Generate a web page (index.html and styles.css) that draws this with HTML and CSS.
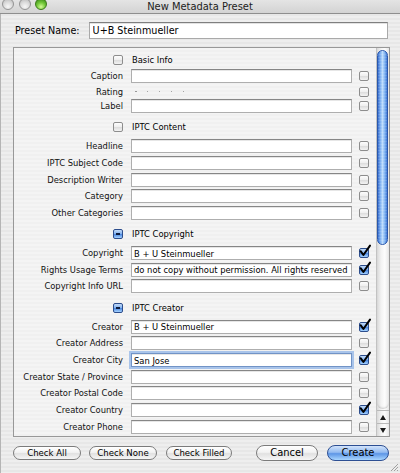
FILE: index.html
```html
<!DOCTYPE html>
<html>
<head>
<meta charset="utf-8">
<title>New Metadata Preset</title>
<link rel="stylesheet" href="styles.css">
</head>
<body>
<div class="window">
  <div class="titlebar">
    <div class="lights"><span class="light gray"></span><span class="light gray"></span><span class="light green"></span></div>
    <div class="title">New Metadata Preset</div>
    <div></div>
  </div>

  <div class="preset">
    <span class="preset-label">Preset Name:</span>
    <input class="preset-field" value="U+B Steinmueller" readonly>
  </div>

  <div class="panel">
    <div class="form">
      <div class="section first"><span class="cb"></span><span class="sec-title">Basic Info</span></div>
      <div class="row"><span class="lbl">Caption</span><input class="field" readonly><span class="cb"></span></div>
      <div class="row rating"><span class="lbl">Rating</span><span class="dots"><i></i><i></i><i></i><i></i><i></i></span><span class="cb"></span></div>
      <div class="row"><span class="lbl">Label</span><input class="field" readonly><span class="cb"></span></div>

      <div class="section"><span class="cb"></span><span class="sec-title">IPTC Content</span></div>
      <div class="row"><span class="lbl">Headline</span><input class="field" readonly><span class="cb"></span></div>
      <div class="row"><span class="lbl">IPTC Subject Code</span><input class="field" readonly><span class="cb"></span></div>
      <div class="row"><span class="lbl">Description Writer</span><input class="field" readonly><span class="cb"></span></div>
      <div class="row"><span class="lbl">Category</span><input class="field" readonly><span class="cb"></span></div>
      <div class="row"><span class="lbl">Other Categories</span><input class="field" readonly><span class="cb"></span></div>

      <div class="section"><span class="cb mixed"></span><span class="sec-title">IPTC Copyright</span></div>
      <div class="row"><span class="lbl">Copyright</span><input class="field" value="B + U Steinmueller" readonly><span class="cb on"><svg viewBox="0 0 12 13"><path d="M1.6 6.2 L4.4 10 L11 0.6"/></svg></span></div>
      <div class="row"><span class="lbl">Rights Usage Terms</span><input class="field" value="do not copy without permission. All rights reserved" readonly><span class="cb on"><svg viewBox="0 0 12 13"><path d="M1.6 6.2 L4.4 10 L11 0.6"/></svg></span></div>
      <div class="row"><span class="lbl">Copyright Info URL</span><input class="field" readonly><span class="cb"></span></div>

      <div class="section"><span class="cb mixed"></span><span class="sec-title">IPTC Creator</span></div>
      <div class="row"><span class="lbl">Creator</span><input class="field" value="B + U Steinmueller" readonly><span class="cb on"><svg viewBox="0 0 12 13"><path d="M1.6 6.2 L4.4 10 L11 0.6"/></svg></span></div>
      <div class="row"><span class="lbl">Creator Address</span><input class="field" readonly><span class="cb"></span></div>
      <div class="row"><span class="lbl">Creator City</span><input class="field focus" value="San Jose" readonly><span class="cb on"><svg viewBox="0 0 12 13"><path d="M1.6 6.2 L4.4 10 L11 0.6"/></svg></span></div>
      <div class="row"><span class="lbl">Creator State / Province</span><input class="field" readonly><span class="cb"></span></div>
      <div class="row"><span class="lbl">Creator Postal Code</span><input class="field" readonly><span class="cb"></span></div>
      <div class="row"><span class="lbl">Creator Country</span><input class="field" readonly><span class="cb on"><svg viewBox="0 0 12 13"><path d="M1.6 6.2 L4.4 10 L11 0.6"/></svg></span></div>
      <div class="row"><span class="lbl">Creator Phone</span><input class="field" readonly><span class="cb"></span></div>
    </div>

    <div class="scrollbar">
      <div class="thumb"></div>
      <div class="track"></div>
      <div class="arrow up"></div>
      <div class="arrow down"></div>
    </div>
  </div>

  <div class="buttons">
    <button class="btn small w68">Check All</button>
    <button class="btn small w68 g8">Check None</button>
    <button class="btn small w66 g9">Check Filled</button>
    <button class="btn large cancel">Cancel</button>
    <button class="btn large default g9">Create</button>
  </div>

  <svg class="grip" viewBox="0 0 11 11"><path d="M10 3 L3 10 M10 6 L6 10 M10 9 L9 10"/></svg>
</div>
</body>
</html>
```

FILE: styles.css
```css
html, body {
  margin: 0;
  padding: 0;
}

body {
  width: 400px;
  height: 473px;
  overflow: hidden;
  font-family: "DejaVu Sans Condensed", "Liberation Sans", Arial, sans-serif;
  color: #000;
  background: repeating-linear-gradient(to bottom, #eeeeee 0, #eeeeee 2px, #e7e7e7 2px, #e7e7e7 4px);
}

.window {
  position: relative;
  height: 473px;
  display: flex;
  flex-direction: column;
  box-shadow: inset 1px 0 0 #b5b5b5;
}

/* title bar */
.titlebar {
  height: 13px;
  border-bottom: 1px solid #8e8e8e;
  display: grid;
  grid-template-columns: 1fr auto 1fr;
  align-items: start;
  background: linear-gradient(to bottom, #e4e4e4, #d3d3d3);
  overflow: hidden;
}

.lights {
  display: flex;
  gap: 4.5px;
  padding-left: 2px;
  margin-top: -2px;
}

.light {
  width: 12px;
  height: 12px;
  border-radius: 50%;
  box-sizing: border-box;
}

.gray {
  border: 1px solid #949494;
  background: radial-gradient(circle at 50% 75%, #f7f7f7 0, #dadada 50%, #b3b3b3 100%);
}

.green {
  border: 1px solid #3b7a1b;
  background: radial-gradient(circle at 50% 78%, #d4fb98 0, #74c93a 45%, #2f7e12 100%);
}

.title {
  font-size: 11px;
  line-height: 13px;
  color: #1c1c1c;
  white-space: nowrap;
}

/* preset name */
.preset {
  display: flex;
  align-items: center;
  gap: 9px;
  padding: 8px 12px 0 15px;
}

.preset-label {
  font-size: 10.7px;
  white-space: nowrap;
}

.preset-field {
  flex: 1;
  min-width: 0;
  height: 17px;
  box-sizing: border-box;
  margin: 0;
  padding: 0 0 0 3px;
  border: 1px solid #a9a9a9;
  border-top-color: #7f7f7f;
  box-shadow: inset 0 1px 0 #e2e2e2;
  background: #fff;
  font-family: inherit;
  font-size: 10.7px;
  color: #000;
  outline: none;
}

/* panel */
.panel {
  margin: 8px 10px 0 13px;
  height: 390px;
  box-sizing: border-box;
  border: 1px solid #989898;
  display: flex;
  background: repeating-linear-gradient(to bottom, #f4f4f4 0, #f4f4f4 2px, #f0f0f0 2px, #f0f0f0 4px);
}

.form {
  width: 362px;
  padding-left: 1px;
  box-sizing: border-box;
  overflow: hidden;
}

.row,
.section {
  display: grid;
  grid-template-columns: 109px 221px 10px;
  column-gap: 7px;
}

.row {
  height: 16.7px;
  align-items: start;
}

.row.rating {
  height: 13.3px;
}

.section {
  height: 23.5px;
  align-items: center;
  box-sizing: border-box;
}

.section.first {
  height: 21px;
  padding-top: 2px;
}

.section .cb {
  justify-self: end;
  margin-top: 0;
  margin-right: 1px;
}

.sec-title {
  font-size: 9.3px;
  line-height: 12px;
  padding-left: 1px;
  white-space: nowrap;
}

.lbl {
  text-align: right;
  font-size: 9.3px;
  line-height: 14px;
  padding-right: 1px;
  white-space: nowrap;
  color: #111;
}

.rating .lbl {
  line-height: 12px;
}

.field {
  width: 221px;
  height: 14px;
  box-sizing: border-box;
  margin: 0;
  padding: 0 0 0 2px;
  border: 1px solid #aeaeae;
  border-top-color: #868686;
  box-shadow: inset 0 1px 0 #e6e6e6;
  background: #fff;
  font-family: inherit;
  font-size: 9.3px;
  color: #000;
  outline: none;
}

.field.focus {
  border-color: #7193c6;
  box-shadow: 0 0 0 2px #a9c4ea, inset 0 1px 0 #e6e6e6;
}

.dots {
  display: flex;
  align-items: center;
  gap: 10.3px;
  height: 12px;
  padding-left: 4px;
}

.dots i {
  width: 1.6px;
  height: 1.6px;
  border-radius: 50%;
  background: #8a8a8a;
}

/* checkboxes */
.cb {
  position: relative;
  width: 10px;
  height: 10px;
  margin-top: 2px;
  box-sizing: border-box;
  border: 1px solid #8d8d8d;
  border-radius: 2px;
  background: linear-gradient(to bottom, #fdfdfd 0%, #eeeeee 50%, #dedede 55%, #f3f3f3 100%);
}

.rating .cb {
  margin-top: 1px;
}

.cb.on,
.cb.mixed {
  border-color: #2c4d8c;
  background: linear-gradient(to bottom, #c3dbf9 0%, #86b4ef 45%, #4d88e0 55%, #a5d3ff 100%);
}

.cb.mixed::after {
  content: "";
  position: absolute;
  left: 2px;
  right: 2px;
  top: 3px;
  height: 2px;
  background: #0d1b3c;
}

.cb.on svg {
  position: absolute;
  left: -1px;
  top: -4px;
  width: 12px;
  height: 13px;
  overflow: visible;
}

.cb.on svg path {
  fill: none;
  stroke: #000;
  stroke-width: 2;
  stroke-linecap: round;
  stroke-linejoin: round;
}

/* scrollbar */
.scrollbar {
  width: 13px;
  box-sizing: border-box;
  border-left: 1px solid #c2c2c2;
  display: flex;
  flex-direction: column;
  background: linear-gradient(to right, #d9d9d9 0%, #f3f3f3 35%, #fdfdfd 65%, #e6e6e6 100%);
}

.thumb {
  width: 11px;
  height: 195px;
  margin-top: 2px;
  box-sizing: border-box;
  border-radius: 6px;
  border: 1px solid #2a58ad;
  background:
    repeating-linear-gradient(to bottom, rgba(255,255,255,0.12) 0, rgba(255,255,255,0.12) 1px, rgba(0,0,0,0) 1px, rgba(0,0,0,0) 3px),
    linear-gradient(to right, #3a6fcf 0%, #74a8ee 22%, #bcdcfd 50%, #7aaff0 78%, #3d74d3 100%);
}

.track {
  flex: 1;
  border-radius: 0 0 6px 6px;
  box-shadow: inset 0 -2px 2px -1px rgba(0,0,0,0.18);
  margin-bottom: 1px;
}

.arrow {
  height: 12px;
  position: relative;
  border-top: 1px solid #b9b9b9;
}

.arrow::after {
  content: "";
  position: absolute;
  left: 3px;
  top: 4px;
  border-left: 3px solid transparent;
  border-right: 3px solid transparent;
}

.arrow.up::after {
  border-bottom: 5px solid #1a1a1a;
}

.arrow.down::after {
  border-top: 5px solid #1a1a1a;
}

/* buttons */
.buttons {
  display: flex;
  align-items: center;
  height: 16px;
  margin-top: 8px;
  padding: 0 11px 0 13px;
}

.btn {
  box-sizing: border-box;
  margin: 0;
  padding: 0;
  border: 1px solid #7b7b7b;
  font-family: inherit;
  color: #000;
  text-align: center;
  white-space: nowrap;
  background: linear-gradient(to bottom, #ffffff 0%, #f2f2f2 45%, #e1e1e1 55%, #f6f6f6 100%);
}

.btn.small {
  height: 14px;
  border-radius: 7px;
  font-size: 9.5px;
  line-height: 12px;
}

.btn.large {
  width: 62px;
  height: 16px;
  border-radius: 8px;
  font-size: 11px;
  line-height: 14px;
}

.w68 { width: 68px; }
.w66 { width: 66px; }
.g8 { margin-left: 8px; }
.g9 { margin-left: 9px; }

.btn.cancel {
  margin-left: auto;
}

.btn.default {
  border-color: #2d4f93;
  background: linear-gradient(to bottom, #d2e4fb 0%, #93bbf1 45%, #5d96e6 55%, #a9d6ff 100%);
}

.grip {
  position: absolute;
  right: 1px;
  bottom: 1px;
  width: 11px;
  height: 11px;
}

.grip path {
  stroke: #a0a0a0;
  stroke-width: 1;
  fill: none;
}
```
